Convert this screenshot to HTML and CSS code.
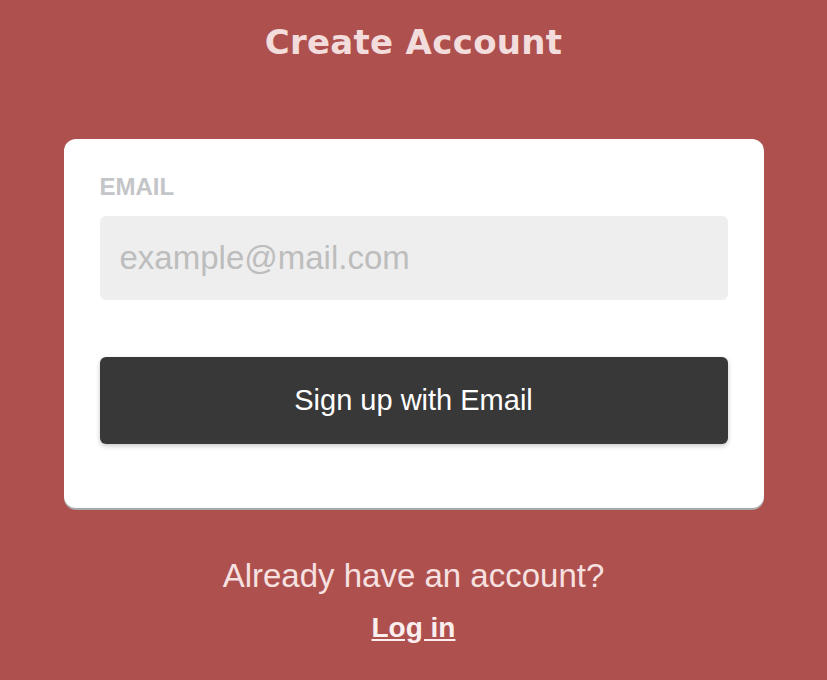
FILE: index.html
```html
<!DOCTYPE html>
<html lang="en">
<head>
<meta charset="utf-8">
<title>Create Account</title>
<link rel="stylesheet" href="styles.css">
</head>
<body>
<main class="page">
  <h1 class="title">Create Account</h1>
  <form class="card">
    <label class="label" for="email">EMAIL</label>
    <input class="input" id="email" type="email" placeholder="example@mail.com">
    <button class="btn" type="button">Sign up with Email</button>
  </form>
  <p class="already">Already have an account?</p>
  <a class="login" href="#">Log in</a>
</main>
</body>
</html>
```

FILE: styles.css
```css
* { box-sizing: border-box; }
html, body { margin: 0; padding: 0; }
body {
  background: #ae504e;
  font-family: "Liberation Sans", Arial, sans-serif;
  height: 680px;
  overflow: hidden;
}
.page {
  display: flex;
  flex-direction: column;
  align-items: center;
  padding-top: 22px;
}
.title {
  margin: 0;
  font-family: "DejaVu Sans", sans-serif;
  font-size: 34px;
  line-height: 40px;
  font-weight: 700;
  letter-spacing: 0.3px;
  color: #f3dcdc;
}
.card {
  margin-top: 77px;
  width: 700px;
  background: #fff;
  border-radius: 12px;
  box-shadow: 0 2px 0 #a9a9a9;
  padding: 34px 36px 64px;
  display: flex;
  flex-direction: column;
}
.label {
  font-size: 24px;
  line-height: 28px;
  font-weight: 700;
  color: #c4c5c8;
}
.input {
  margin-top: 15px;
  height: 84px;
  border: none;
  border-radius: 6px;
  background: #eeeeee;
  padding: 0 20px;
  font-family: "Liberation Sans", Arial, sans-serif;
  font-size: 33px;
  color: #555;
  outline: none;
}
.input::placeholder { color: #bdbdbd; }
.btn {
  margin-top: 57px;
  height: 87px;
  border: none;
  border-radius: 6px;
  background: #383838;
  color: #fff;
  font-family: "Liberation Sans", Arial, sans-serif;
  font-size: 29px;
  box-shadow: 0 2px 5px rgba(0,0,0,0.22);
}
.already {
  margin: 49px 0 0;
  font-size: 33px;
  line-height: 38px;
  color: #f7e0e0;
}
.login {
  margin-top: 17px;
  font-size: 28px;
  line-height: 32px;
  font-weight: 700;
  color: #fbeeee;
  text-decoration: underline;
}
```
